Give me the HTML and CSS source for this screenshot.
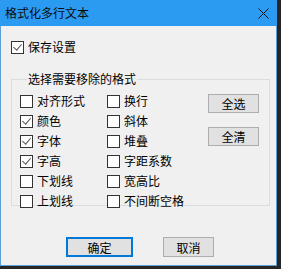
FILE: index.html
```html
<!DOCTYPE html>
<html>
  <head>
    <meta charset="utf-8">
    <title>格式化多行文本</title>
    <link rel="stylesheet" href="styles.css">
  </head>
  <body>
    <div class="window">
      <div class="titlebar">
        <span class="title">格式化多行文本</span>
        <svg class="close" width="11" height="11" viewBox="0 0 11 11">
          <path d="M0.5 0.5 L10.5 10.5 M10.5 0.5 L0.5 10.5" stroke="#111" stroke-width="1" fill="none"/>
        </svg>
      </div>

      <div class="content">
        <label class="check save">
          <span class="box on"></span>保存设置
        </label>

        <fieldset class="group">
          <legend>选择需要移除的格式</legend>
          <div class="grid">
            <div class="col">
              <label class="check"><span class="box"></span>对齐形式</label>
              <label class="check"><span class="box on"></span>颜色</label>
              <label class="check"><span class="box on"></span>字体</label>
              <label class="check"><span class="box on"></span>字高</label>
              <label class="check"><span class="box"></span>下划线</label>
              <label class="check"><span class="box"></span>上划线</label>
            </div>
            <div class="col">
              <label class="check"><span class="box"></span>换行</label>
              <label class="check"><span class="box"></span>斜体</label>
              <label class="check"><span class="box"></span>堆叠</label>
              <label class="check"><span class="box"></span>字距系数</label>
              <label class="check"><span class="box"></span>宽高比</label>
              <label class="check"><span class="box"></span>不间断空格</label>
            </div>
            <div class="side">
              <button class="btn small">全选</button>
              <button class="btn small">全清</button>
            </div>
          </div>
        </fieldset>

        <div class="actions">
          <button class="btn ok">确定</button>
          <button class="btn cancel">取消</button>
        </div>
      </div>
    </div>
  </body>
</html>
```

FILE: styles.css
```css
*{
  box-sizing:border-box;
  margin:0;
  padding:0;
}

body{
  background:#262626;
  width:281px;
  height:269px;
  overflow:hidden;
  font-family:"Noto Sans CJK SC", "Microsoft YaHei", sans-serif;
  font-size:12px;
  color:#000;
}

.window{
  width:277px;
  height:266px;
  background:#f0f0f0;
  border:1px solid #5c9fd8;
  border-top:none;
  display:flex;
  flex-direction:column;
}

.titlebar{
  height:26px;
  background:#2b9bf1;
  display:flex;
  align-items:center;
  justify-content:space-between;
  padding:0 8px 0 5px;
  margin:0 -1px;
}

.title{
  line-height:26px;
  color:#0a0a0a;
}

.close{
  display:block;
  margin-top:1px;
}

.content{
  flex:1;
  padding:0 6px 0 10px;
  display:flex;
  flex-direction:column;
}

.check{
  display:flex;
  align-items:center;
  height:20px;
  line-height:20px;
  white-space:nowrap;
}

.box{
  width:13px;
  height:13px;
  border:1px solid #333;
  background:#fff;
  margin-right:4px;
  flex:none;
  position:relative;
}

.box.on::after{
  content:"";
  position:absolute;
  left:3px;
  top:0px;
  width:4px;
  height:7px;
  border-right:1px solid #555;
  border-bottom:1px solid #555;
  transform:rotate(40deg);
}

.save{
  margin-top:11px;
}

.group{
  margin-top:15px;
  border:1px solid #dcdcdc;
  padding:12px 0 0 8px;
  height:134px;
}

.group legend{
  margin-left:7px;
  padding:0 1px;
  line-height:14px;
}

.grid{
  display:grid;
  grid-template-columns:87px 101px 51px;
  margin-top:-7px;
}

.side{
  display:flex;
  flex-direction:column;
  gap:14px;
  padding-top:3px;
}

.btn{
  font-family:inherit;
  font-size:12px;
  background:#e1e1e1;
  border:1px solid #adadad;
  color:#000;
  height:19px;
  line-height:17px;
}

.small{
  width:51px;
}

.actions{
  display:flex;
  gap:30px;
  padding-left:55px;
  margin-top:31px;
}

.ok{
  width:67px;
  height:20px;
  border:2px solid #0078d7;
}

.cancel{
  width:51px;
  height:20px;
}
```
